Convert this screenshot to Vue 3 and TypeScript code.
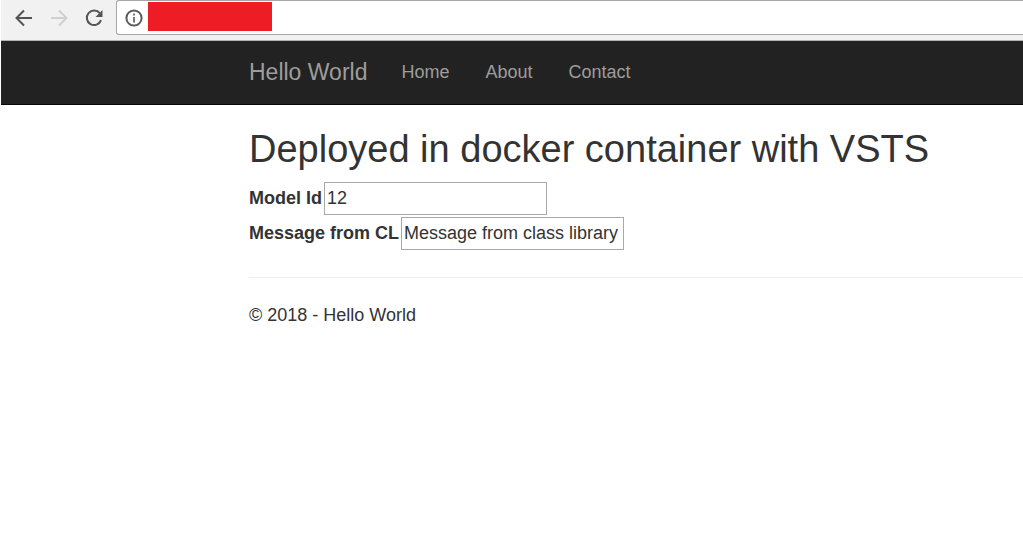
<script setup lang="ts">
import { ref } from 'vue'

const address = ref('')
const modelId = ref('12')
const message = ref('Message from class library')
const links: string[] = ['Home', 'About', 'Contact']
</script>

<template>
  <div class="window">
    <div class="toolbar">
      <button class="tool" type="button" aria-label="Back">
        <svg viewBox="0 0 20 20"><path d="M18 10H3M10 2.5L2.5 10L10 17.500" /></svg>
      </button>
      <button class="tool" type="button" aria-label="Forward" disabled>
        <svg viewBox="0 0 20 20"><path d="M2 10H17M10 2.500L17.500 10L10 17.500" /></svg>
      </button>
      <button class="tool" type="button" aria-label="Reload">
        <svg viewBox="0 0 20 20">
          <path d="M15.800 5.200A7.300 7.300 0 1 0 17 12.200" />
          <path class="solid" d="M18.500 2V9H11.500Z" />
        </svg>
      </button>
      <div class="address">
        <svg class="info" viewBox="0 0 18 18">
          <circle cx="9" cy="9" r="7.600" />
          <path class="mark" d="M9 8V13.500M9 4.500V6.500" />
        </svg>
        <span class="redaction"></span>
        <input v-model="address" class="url" type="text" aria-label="Address" />
      </div>
    </div>

    <nav class="navbar">
      <a class="brand" href="#">Hello World</a>
      <a v-for="link in links" :key="link" class="link" href="#">{{ link }}</a>
    </nav>

    <main class="content">
      <h2>Deployed in docker container with VSTS</h2>
      <div class="field">
        <label for="model-id">Model Id</label>
        <input id="model-id" v-model="modelId" type="text" />
      </div>
      <div class="field">
        <label for="message">Message from CL</label>
        <input id="message" v-model="message" type="text" />
      </div>
      <hr />
      <footer>© 2018 - Hello World</footer>
    </main>
  </div>
</template>

<style>
body {
  background: #fff;
}
</style>

<style scoped>
* {
  box-sizing: border-box;
}
.window {
  padding-left: 1px;
  font-family: "Liberation Sans", Arial, sans-serif;
  font-size: 18px;
  line-height: 24px;
  color: #333;
}
.toolbar {
  display: flex;
  height: 41px;
  padding: 0 0 5px 13px;
  background: #f1f1f1;
  border-bottom: 1px solid #b2b4b3;
}
.tool {
  display: flex;
  align-items: center;
  width: 20px;
  margin-right: 15px;
  padding: 0;
  border: 0;
  background: none;
}
.tool svg {
  width: 20px;
  height: 20px;
  fill: none;
  stroke: #555;
  stroke-width: 2;
}
.tool:disabled svg {
  stroke: #d0d0d0;
}
.tool .solid {
  fill: #555;
  stroke: none;
}
.address {
  flex: 1;
  display: flex;
  align-items: center;
  margin-left: -3px;
  padding-left: 8px;
  background: #fff;
  border: 1px solid #a6a6a6;
  border-right: 0;
  border-radius: 3px 0 0 3px;
}
.info {
  width: 18px;
  height: 18px;
  fill: none;
  stroke: #5a5a5a;
  stroke-width: 2;
}
.info .mark {
  stroke: #777;
}
.redaction {
  width: 124px;
  height: 29px;
  margin-left: 5px;
  margin-bottom: 2px;
  background: #ee1c25;
}
.url {
  flex: 1;
  min-width: 0;
  border: 0;
  outline: 0;
}
.navbar {
  display: flex;
  align-items: center;
  height: 64px;
  padding: 0 0 1px 248px;
  background: #222;
  border-bottom: 1px solid #080808;
}
.navbar a {
  color: #9d9d9d;
  text-decoration: none;
}
.navbar .brand {
  margin-right: 16px;
  font-size: 23px;
}
.link {
  padding: 0 18px;
}
.content {
  padding: 24px 0 0 248px;
}
h2 {
  margin: 0 0 12px;
  font-size: 38px;
  font-weight: 400;
  line-height: 41px;
}
.field {
  display: flex;
  align-items: baseline;
  margin-bottom: 2px;
}
label {
  margin-right: 2px;
  font-weight: 700;
}
.field input {
  width: 223px;
  height: 33px;
  padding: 0 2px;
  border: 1px solid #a9a9a9;
  font: inherit;
  color: inherit;
  background: #fff;
}
hr {
  margin: 27px 0 25px;
  border: 0;
  border-top: 1px solid #eee;
}
</style>
